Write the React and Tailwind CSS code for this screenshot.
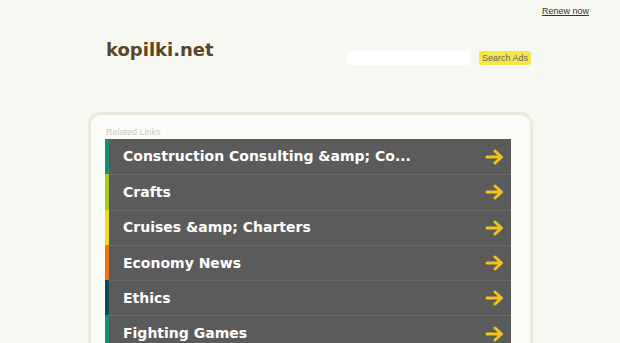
import React from 'react';

const LINKS = [
  { label: 'Construction Consulting &amp; Co...', bar: 'bg-[#1e8c74]' },
  { label: 'Crafts', bar: 'bg-[#a6cc1e]' },
  { label: 'Cruises &amp; Charters', bar: 'bg-[#f2da1c]' },
  { label: 'Economy News', bar: 'bg-[#f07412]' },
  { label: 'Ethics', bar: 'bg-[#0c4a5c]' },
  { label: 'Fighting Games', bar: 'bg-[#1e8c74]' },
];

const Arrow = () => (
  <svg width="20" height="16" viewBox="0 0 20 16" className="shrink-0">
    <path
      d="M2 8 H16 M10 2 L16.5 8 L10 14"
      fill="none"
      stroke="#f5c21a"
      strokeWidth="3"
      strokeLinecap="round"
      strokeLinejoin="round"
    />
  </svg>
);

const App = () => {
  return (
    <div className="h-[343px] w-[620px] overflow-hidden bg-[#f8f8f2] font-['Liberation_Sans',Arial,sans-serif]">
      {/* top bar */}
      <div className="flex justify-end pr-[31px] pt-[5px]">
        <a href="#" className="text-[9px] leading-[12px] text-[#333] underline">
          Renew now
        </a>
      </div>

      {/* header */}
      <div className="mt-[17px] flex items-center pl-[106px] pr-[89px]">
        <h1 className="font-['DejaVu_Sans',sans-serif] text-[18px] font-bold leading-[22px] text-[#5a4526]">
          kopilki.net
        </h1>
        <div className="ml-auto mt-[17px] flex items-center gap-[9px]">
          <input className="h-[14px] w-[123px] rounded-[2px] bg-white outline-none" />
          <button className="h-[14px] rounded-[3px] bg-[#f2e848] px-[3px] text-[9px] leading-[14px] text-[#666]">
            Search Ads
          </button>
        </div>
      </div>

      {/* related links card */}
      <div className="ml-[88px] mt-[47px] w-[445px] rounded-t-[12px] border-[3px] border-b-0 border-[#eaeadd] bg-[#fcfcf8] pl-[14px] pt-[12px]">
        <p className="pl-[1px] text-[9px] leading-[10px] text-[#c8c8c0]">Related Links</p>
        <ul className="mt-[2px] w-[406px]">
          {LINKS.map((link, i) => (
            <li key={i} className="flex h-[35.3px] bg-[#5b5b5b]">
              <div className={`w-[4px] ${link.bar}`} />
              <div
                className={`flex flex-1 items-center justify-between pl-[14px] pr-[6px] ${
                  i > 0 ? 'border-t border-[#6a6a6a]' : ''
                }`}
              >
                <span className="font-['DejaVu_Sans',sans-serif] text-[14px] font-bold text-white">
                  {link.label}
                </span>
                <Arrow />
              </div>
            </li>
          ))}
        </ul>
      </div>
    </div>
  );
};

export default App;
